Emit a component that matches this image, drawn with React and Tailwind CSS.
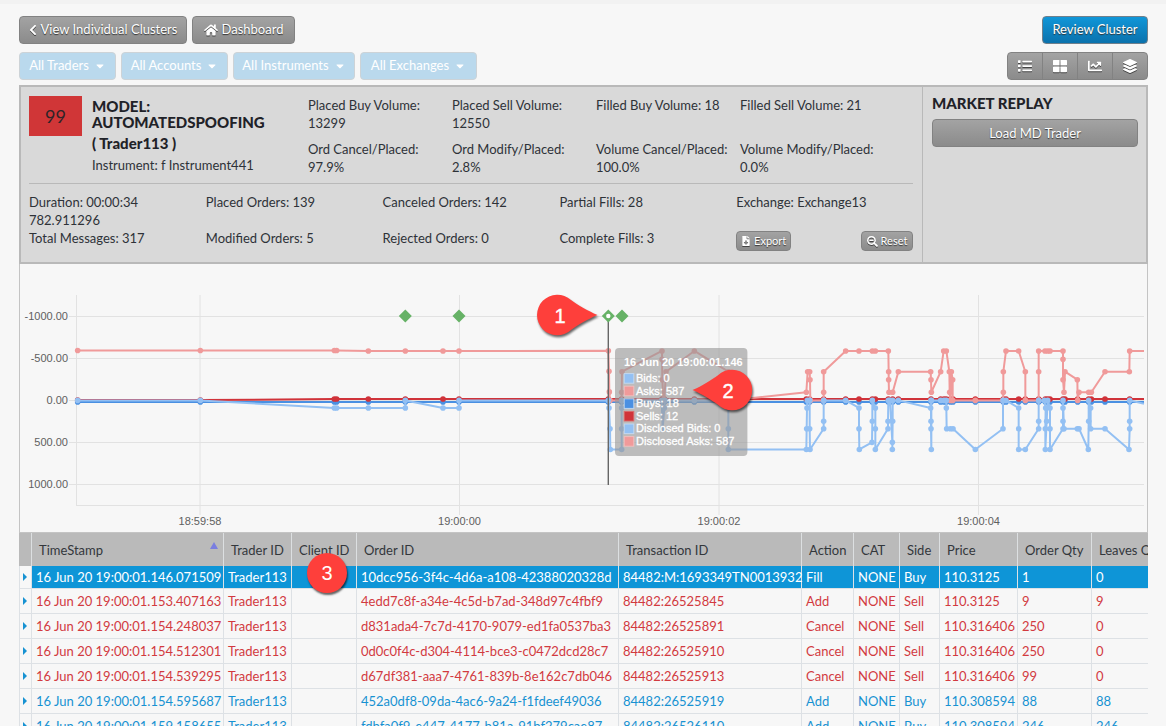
import React from "react";
import {
  FaChevronLeft,
  FaHome,
  FaList,
  FaThLarge,
  FaChartLine,
  FaLayerGroup,
  FaFileDownload,
  FaSearchMinus,
  FaCaretDown,
} from "react-icons/fa";

const BUTTON =
  "flex items-center justify-center rounded border border-[#828282] bg-linear-to-b from-[#a3a3a3] to-[#8b8b8b] whitespace-nowrap text-white [text-shadow:0_1px_1px_#333] [&_svg]:drop-shadow-[0_1px_0_#444]";

const FILTERS = [
  { label: "All Traders", width: "w-[97px]" },
  { label: "All Accounts", width: "w-[107px]" },
  { label: "All Instruments", width: "w-[122px]" },
  { label: "All Exchanges", width: "w-[117px]" },
];

const VIEWS = [
  { label: "List view", Icon: FaList },
  { label: "Grid view", Icon: FaThLarge },
  { label: "Chart view", Icon: FaChartLine },
  { label: "Stack view", Icon: FaLayerGroup },
];

function Toolbar() {
  return (
    <header className="flex flex-col gap-2 border-t-4 border-[#f2f2f2] pt-3 pr-[18px] pl-[19px]">
      <div className="flex items-center justify-between">
        <div className="flex items-center gap-[5px]">
          <button className={`${BUTTON} h-7 w-[168px] gap-1 text-[13px]`}>
            <FaChevronLeft className="h-3 w-2" />
            View Individual Clusters
          </button>
          <button className={`${BUTTON} h-7 w-[103px] gap-1 text-[13px]`}>
            <FaHome className="size-[14px]" />
            Dashboard
          </button>
        </div>
        <button className="h-7 w-[106px] rounded border border-[#70808c] bg-linear-to-b from-[#1096d8] to-[#0b72ad] text-[13px] text-white [text-shadow:0_1px_1px_#333]">
          Review Cluster
        </button>
      </div>
      <div className="flex items-center justify-between">
        <div className="flex items-center gap-[5px]">
          {FILTERS.map((f) => (
            <button
              key={f.label}
              className={`flex h-7 items-center justify-center gap-[5px] rounded border border-[#cdd3d7] bg-[#bad9ed] text-[13px] text-white ${f.width}`}
            >
              {f.label}
              <FaCaretDown className="size-3" />
            </button>
          ))}
        </div>
        <div className="flex">
          {VIEWS.map(({ label, Icon }) => (
            <button
              key={label}
              aria-label={label}
              className={`${BUTTON} -ml-px h-7 w-9 rounded-none first:rounded-l last:rounded-r`}
            >
              <Icon className="size-[14px]" />
            </button>
          ))}
        </div>
      </div>
    </header>
  );
}

const VOLUMES = [
  ["Placed Buy Volume:", "13299"],
  ["Placed Sell Volume:", "12550"],
  ["Filled Buy Volume: 18", ""],
  ["Filled Sell Volume: 21", ""],
  ["Ord Cancel/Placed:", "97.9%"],
  ["Ord Modify/Placed:", "2.8%"],
  ["Volume Cancel/Placed:", "100.0%"],
  ["Volume Modify/Placed:", "0.0%"],
];

function Summary() {
  return (
    <section className="flex border-2 border-[#b9b9b9] bg-[#d9d9d9] text-[13px] leading-[18px] text-[#2e3238]">
      <div className="min-w-0 flex-1 pt-[9px] pr-[9px] pb-[11px] pl-2">
        <div className="flex border-b border-[#b9b9b9] pb-[7px]">
          <div className="flex h-10 w-[53px] items-center justify-center bg-[#d03637] text-lg text-[#2e2428]">
            99
          </div>
          <div className="ml-[10px] w-[216px]">
            <h1 className="pt-0.5 text-[15px] leading-4 font-black text-[#1f2228]">
              MODEL:
              <br />
              AUTOMATEDSPOOFING
            </h1>
            <h2 className="mt-1 text-[15px] leading-[18px] font-black text-[#1f2228]">( Trader113 )</h2>
            <p className="mt-1">Instrument: f Instrument441</p>
          </div>
          <dl className="grid flex-1 grid-cols-4 gap-y-2 pr-[29px]">
            {VOLUMES.map(([label, value]) => (
              <div key={label} className="whitespace-nowrap">
                <dt>{label}</dt>
                <dd>{value}</dd>
              </div>
            ))}
          </dl>
        </div>
        <div className="grid grid-cols-5 pt-[9px]">
          <div>
            <p>Duration: 00:00:34</p>
            <p>782.911296</p>
            <p>Total Messages: 317</p>
          </div>
          <div className="flex flex-col gap-[18px]">
            <p>Placed Orders: 139</p>
            <p>Modified Orders: 5</p>
          </div>
          <div className="flex flex-col gap-[18px]">
            <p>Canceled Orders: 142</p>
            <p>Rejected Orders: 0</p>
          </div>
          <div className="flex flex-col gap-[18px]">
            <p>Partial Fills: 28</p>
            <p>Complete Fills: 3</p>
          </div>
          <div className="flex flex-col gap-5">
            <p>Exchange: Exchange13</p>
            <div className="flex justify-between">
              <button className={`${BUTTON} h-5 w-[55px] gap-[3px] text-[11px]`}>
                <FaFileDownload className="size-[10px]" />
                Export
              </button>
              <button className={`${BUTTON} h-5 w-[52px] gap-[3px] text-[11px]`}>
                <FaSearchMinus className="size-[11px]" />
                Reset
              </button>
            </div>
          </div>
        </div>
      </div>
      <aside className="w-[224px] border-l border-[#b9b9b9] pt-[3px] pr-2 pl-[9px]">
        <h2 className="py-[3px] text-[15px] leading-5 font-black text-[#1f2228]">MARKET REPLAY</h2>
        <button className={`${BUTTON} mt-[3px] h-7 w-full text-[13px]`}>Load MD Trader</button>
      </aside>
    </section>
  );
}

const BLUE = "#4a90e2";
const RED = "#d0333a";
const SKY = "#93c0f3";
const PINK = "#f09a9a";

const LEFT = [-2047, -1679, -1277, -1270, -1175, -1064, -951, -903, -455];

// Each point is [tick, quantity]; three ticks make one horizontal unit.
const ASKS = [
  [-2047, -592], [-1679, -592], [-1277, -592], [-1270, -592], [-1175, -587], [-1064, -587], [-951, -587], [-903, -587],
  [-455, -590], [-453, -347], [-452, -101], [-450, 0], [-415, 0], [-415, -97], [-414, -341], [-294, -587], [-294, -488],
  [-293, -246], [-290, 0], [-287, 0], [-282, -341], [-197, -587], [-95, -341], [-95, -97], [-94, 0],
  [139, -97], [143, -341], [149, -341], [150, -246], [151, 0], [191, 0], [191, -97], [191, -341], [257, -587],
  [297, -587], [337, -587], [346, -587], [385, -587], [386, -341], [386, -246], [387, -97], [398, -97], [415, -341],
  [512, -341], [513, -246], [514, -97], [542, -341], [551, -587], [559, -587], [568, -341], [569, -97], [571, 0],
  [574, -341], [578, -246], [578, 0], [646, 0], [729, 0], [730, -97], [730, -341], [738, -587], [776, -587],
  [796, -341], [796, 0], [836, 0], [836, -341], [836, -587], [855, -587], [863, -587], [870, -587], [909, -587],
  [909, -488], [909, -246], [912, -97], [915, -341], [952, -246], [953, 0], [957, -97], [986, -97], [994, -97],
  [1035, -341], [1108, -341], [1109, -587], [1152, -587],
];

const BIDS = [
  [-2047, 0], [-1679, 0], [-1277, 90], [-1270, 90], [-1175, 90], [-1064, 90], [-1064, 0], [-951, 90], [-903, 90],
  [-903, 0], [-455, 0], [-453, 90], [-450, 336], [-449, 583], [-415, 583], [-415, 336], [-415, 90], [-415, 0],
  [-295, 0], [-292, 336], [-287, 90], [-285, 0], [-197, 0], [-96, 0], [-95, 90], [-95, 336], [-95, 583],
  [139, 583], [140, 336], [141, 90], [142, 0], [149, 0], [149, 336], [150, 583], [191, 336], [191, 248], [191, 0],
  [257, 0], [297, 90], [297, 336], [298, 583], [336, 498], [337, 248], [337, 0], [346, 90], [346, 336], [346, 583],
  [384, 336], [384, 248], [385, 0], [390, 0], [397, 498], [397, 583], [398, 248], [398, 0], [415, 0], [512, 90],
  [513, 0], [513, 248], [513, 336], [514, 583], [514, 0], [542, 0], [552, 0], [559, 0], [559, 90], [560, 336],
  [571, 336], [579, 336], [646, 583], [729, 336], [729, 0], [738, 0], [776, 90], [776, 336], [776, 583], [796, 583],
  [836, 336], [836, 248], [836, 0], [853, 0], [857, 90], [856, 336], [856, 583], [860, 248], [863, 0], [870, 90],
  [870, 336], [870, 583], [909, 336], [909, 248], [909, 90], [909, 0], [912, 336], [952, 336], [957, 336],
  [985, 583], [986, 248], [986, 0], [992, 90], [992, 336], [1035, 336], [1107, 583], [1109, 336], [1109, 248],
  [1109, 0], [1152, 40],
];

const FILL_TICKS = [
  ...LEFT, -415, -294, -287, -197, -95, 139, 149, 191, 257, 297, 337, 346, 385, 398, 415, 513, 542, 552, 559, 571, 579,
  646, 730, 738, 776, 796, 836, 856, 863, 870, 909, 915, 953, 986, 994, 1035, 1109, 1152,
];
const BUYS = FILL_TICKS.map((t) => [t, 18]);
const SELLS = FILL_TICKS.map((t) => [t, t < -1500 ? -4 : -16]);

const px = (t) => 760 + t / 3;
const py = (q) => 400.4 + q * 0.0842;

function Series({ points, color }) {
  return (
    <g>
      <polyline
        points={points.map(([t, q]) => `${px(t)},${py(q)}`).join(" ")}
        fill="none"
        stroke={color}
        strokeWidth="2"
        strokeLinejoin="round"
      />
      {points.map(([t, q], i) =>
        t < 1150 ? <circle key={i} cx={px(t)} cy={py(q)} r="2.8" fill={color} /> : null
      )}
    </g>
  );
}

const TOOLTIP = [
  ["Bids: 0", SKY],
  ["Asks: 587", PINK],
  ["Buys: 18", BLUE],
  ["Sells: 12", RED],
  ["Disclosed Bids: 0", SKY],
  ["Disclosed Asks: 587", PINK],
];

function Chart() {
  return (
    <section className="border-x border-b border-[#c4c4c4]">
      <svg
        viewBox="20 264 1127 268"
        className="block h-auto w-full font-['Liberation_Sans',Arial,sans-serif]"
        role="img"
        aria-label="Order quantity over time"
      >
        <g stroke="#e2e2e2" strokeWidth="1">
          {[316.5, 358.5, 400.5, 442.5, 484.5].map((y) => (
            <line key={y} x1="69" x2="1144" y1={y} y2={y} />
          ))}
          <line x1="76" x2="1144" y1="505.5" y2="505.5" />
          <line x1="76.5" x2="76.5" y1="295" y2="506" />
          {[200, 459.5, 719, 978.5].map((x) => (
            <line key={x} x1={x} x2={x} y1="295" y2="515" />
          ))}
        </g>
        <g fill="#606060" fontSize="11">
          {["-1000.00", "-500.00", "0.00", "500.00", "1000.00"].map((label, i) => (
            <text key={label} x="68" y={320 + i * 42} textAnchor="end">
              {label}
            </text>
          ))}
          {["18:59:58", "19:00:00", "19:00:02", "19:00:04"].map((label, i) => (
            <text key={label} x={200 + i * 259.5} y="525" textAnchor="middle">
              {label}
            </text>
          ))}
        </g>
        <Series points={BUYS} color={BLUE} />
        <Series points={SELLS} color={RED} />
        <Series points={ASKS} color={PINK} />
        <Series points={BIDS} color={SKY} />
        <line x1="608.3" x2="608.3" y1="316" y2="485" stroke="#666" strokeWidth="1.4" />
        {[405.3, 459, 608.3, 622].map((x) => (
          <path key={x} d={`M${x} 309.5l6.5 6.5-6.5 6.5-6.5-6.5z`} fill="#66b266" />
        ))}
        <circle cx="608.3" cy="316" r="2.2" fill="#fff" />

        <rect x="615" y="348" width="132.4" height="108" rx="4" fill="#989898" fillOpacity="0.62" />
        <g fill="#fff" fontSize="11">
          <text x="624" y="366" fontWeight="bold">
            16 Jun 20 19:00:01.146
          </text>
          {TOOLTIP.map(([label, color], i) => (
            <g key={label}>
              <rect
                x="624.2"
                y={373.6 + i * 12.6}
                width="9.6"
                height="9.6"
                fill={color}
                stroke={i === 3 ? "#dc6a6c" : i === 1 || i === 5 ? "#f3c0c0" : "#c4daf3"}
                strokeOpacity="0.9"
              />
              <text x="636" y={382 + i * 12.6} stroke="#fff" strokeWidth="0.3">
                {label}
              </text>
            </g>
          ))}
        </g>

        <g className="drop-shadow-[1px_2px_1px_rgba(0,0,0,0.6)]" fill="#fe3f3b">
          <path d="M597.5 315 C588 311 577 304.500 571 300 A20.300 20.300 0 1 0 571 330 C577 325.500 588 319 597.500 315z" />
          <path d="M692.500 390 C702 386 712 379.500 718 375.200 A20.300 20.300 0 1 1 718 404.800 C712 400.500 702 394 692.500 390z" />
        </g>
        <g fill="#fff" stroke="#fff" strokeWidth="0.4" fontSize="20" textAnchor="middle">
          <text x="560" y="323">1</text>
          <text x="728" y="398">2</text>
        </g>
      </svg>
    </section>
  );
}

const COLUMNS = [
  ["", "w-[13px]"],
  ["TimeStamp", "w-[192px]"],
  ["Trader ID", "w-[68px]"],
  ["Client ID", "w-[65px]"],
  ["Order ID", "w-[262px]"],
  ["Transaction ID", "w-[183px]"],
  ["Action", "w-[52px]"],
  ["CAT", "w-[46px]"],
  ["Side", "w-[40px]"],
  ["Price", "w-[78px]"],
  ["Order Qty", "w-[74px]"],
  ["Leaves Qty", "w-[90px]"],
];

const ROWS = [
  ["146.071509", "10dcc956-3f4c-4d6a-a108-42388020328d", "84482:M:1693349TN0013932", "Fill", "Buy", "110.3125", "1", "0"],
  ["153.407163", "4edd7c8f-a34e-4c5d-b7ad-348d97c4fbf9", "84482:26525845", "Add", "Sell", "110.3125", "9", "9"],
  ["154.248037", "d831ada4-7c7d-4170-9079-ed1fa0537ba3", "84482:26525891", "Cancel", "Sell", "110.316406", "250", "0"],
  ["154.512301", "0d0c0f4c-d304-4114-bce3-c0472dcd28c7", "84482:26525910", "Cancel", "Sell", "110.316406", "250", "0"],
  ["154.539295", "d67df381-aaa7-4761-839b-8e162c7db046", "84482:26525913", "Cancel", "Sell", "110.316406", "99", "0"],
  ["154.595687", "452a0df8-09da-4ac6-9a24-f1fdeef49036", "84482:26525919", "Add", "Buy", "110.308594", "88", "88"],
  ["159.158655", "fdbfa0f9-e447-4177-b81a-91bf279cae87", "84482:26526110", "Add", "Buy", "110.308594", "246", "246"],
];

function rowTone(index, side) {
  if (index === 0) return "h-[23px] bg-[#0e95d7] text-white";
  return side === "Sell" ? "h-[25px] text-[#d23a3f]" : "h-[25px] text-[#1792d2]";
}

function Orders() {
  return (
    <section className="relative min-h-0 flex-1">
      <div className="h-full overflow-hidden">
        <table className="w-[1163px] table-fixed border-separate border-spacing-0 text-[13px] leading-[18px] whitespace-nowrap">
          <thead>
            <tr className="h-[33px] bg-[#bababa] text-left text-[#33373c]">
              {COLUMNS.map(([label, width]) => (
                <th
                  key={label}
                  scope="col"
                  className={`border-r border-[#dcdfe1] p-0 pl-[7px] font-normal ${width} first:pl-0`}
                >
                  {label === "TimeStamp" ? (
                    <span className="flex items-center justify-between pr-[5px]">
                      {label}
                      <span className="mb-2 size-0 border-x-4 border-b-[7px] border-x-transparent border-b-[#7a7ee0]" />
                    </span>
                  ) : (
                    label
                  )}
                </th>
              ))}
            </tr>
          </thead>
          <tbody>
            {ROWS.map(([time, order, transaction, action, side, price, qty, leaves], i) => (
              <tr key={time} className={rowTone(i, side)}>
                <td className="border-r border-b border-l border-[#dde1e5] bg-[#f7f7f7] p-0 pl-[3px]">
                  <span className="block size-0 border-y-[4px] border-l-[4px] border-y-transparent border-l-[#1792d2]" />
                </td>
                {[`16 Jun 20 19:00:01.${time}`, "Trader113", "", order, transaction, action, "NONE", side, price, qty, leaves].map(
                  (cell, c) => (
                    <td key={c} className="border-r border-b border-[#dde1e5] p-0 pl-1">
                      {cell}
                    </td>
                  )
                )}
              </tr>
            ))}
          </tbody>
        </table>
      </div>
      <span className="absolute top-5 left-72 flex size-10 items-center justify-center rounded-full bg-[#fe3f3b] font-['Liberation_Sans',Arial,sans-serif] text-xl text-white shadow-[1px_2px_2px_rgba(0,0,0,0.6)]">
        3
      </span>
    </section>
  );
}

export default function App() {
  return (
    <div className="flex h-screen flex-col overflow-hidden bg-[#f7f7f7] font-[Lato,sans-serif]">
      <Toolbar />
      <main className="mt-[5px] mr-[18px] ml-[19px] flex min-h-0 flex-1 flex-col">
        <Summary />
        <Chart />
        <Orders />
      </main>
    </div>
  );
}
